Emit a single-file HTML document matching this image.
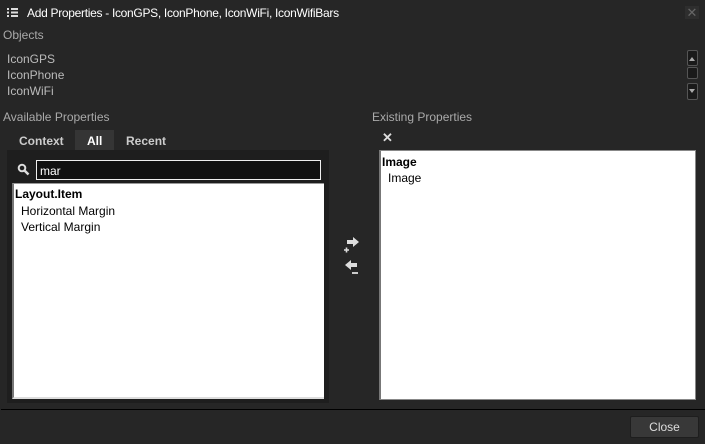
<!DOCTYPE html>
<html><head><style>
body{margin:0;width:705px;height:444px;background:#262626;font-family:"Liberation Sans",sans-serif;font-size:12px;color:#ccc;position:relative;overflow:hidden}
.a{position:absolute;white-space:nowrap}
</style></head><body>
<svg class="a" style="left:7px;top:8px" width="11" height="9"><path d="M0 1h2M4 1h7M0 4.5h2M4 4.5h7M0 8h2M4 8h7" stroke="#ddd" stroke-width="2"/></svg>
<div class="a" style="left:27px;top:6px;color:#fff;font-size:12px;letter-spacing:-0.3px">Add Properties - IconGPS, IconPhone, IconWiFi, IconWifiBars</div>
<div class="a" style="left:685px;top:6px;width:14px;height:13px;background:#2e2e2e;color:#666;font-size:13px;text-align:center;line-height:13px">✕</div>
<div class="a" style="left:3px;top:28px;color:#aaa">Objects</div>
<div class="a" style="left:7px;top:51px;color:#bbb;line-height:16px">IconGPS<br>IconPhone<br>IconWiFi</div>
<div class="a" style="left:687px;top:50px;width:9px;height:14px;border:1px solid #555;border-radius:2px;background:#1a1a1a"></div>
<div class="a" style="left:689px;top:57px;border:3px solid transparent;border-bottom:4px solid #aaa;border-top:0"></div>
<div class="a" style="left:687px;top:67px;width:9px;height:10px;border:1px solid #555;border-radius:2px;background:#1a1a1a"></div>
<div class="a" style="left:687px;top:83px;width:9px;height:15px;border:1px solid #555;border-radius:2px;background:#1a1a1a"></div>
<div class="a" style="left:689px;top:89px;border:3px solid transparent;border-top:4px solid #aaa;border-bottom:0"></div>
<div class="a" style="left:3px;top:110px;color:#aaa">Available Properties</div>
<div class="a" style="left:7px;top:150px;width:322px;height:253px;background:#1e1e1e"></div>
<div class="a" style="left:75px;top:130px;width:39px;height:20px;background:#353535"></div>
<div class="a" style="left:19px;top:134px;color:#ccc;font-weight:bold">Context</div>
<div class="a" style="left:87px;top:134px;color:#fff;font-weight:bold">All</div>
<div class="a" style="left:126px;top:134px;color:#ccc;font-weight:bold">Recent</div>
<svg class="a" style="left:17px;top:163px" width="13" height="13"><circle cx="5" cy="5" r="3.3" fill="none" stroke="#ddd" stroke-width="2"/><line x1="7.5" y1="7.5" x2="11.5" y2="11.5" stroke="#ddd" stroke-width="2.5"/></svg>
<div class="a" style="left:36px;top:160px;width:283px;height:18px;border:1px solid #eee;background:#111"></div>
<div class="a" style="left:40px;top:164px;color:#fff">mar</div>
<div class="a" style="left:12px;top:183px;width:310px;height:213px;background:#fff;border-left:2px solid #777;border-top:1px solid #999;border-bottom:2px solid #ddd"></div>
<div class="a" style="left:15px;top:187px;color:#000;font-weight:bold">Layout.Item</div>
<div class="a" style="left:21px;top:203px;color:#000;line-height:16px">Horizontal Margin<br>Vertical Margin</div>
<div class="a" style="left:372px;top:110px;color:#aaa">Existing Properties</div>
<div class="a" style="left:382px;top:130px;color:#ddd;font-size:13px;font-weight:bold">✕</div>
<div class="a" style="left:379px;top:150px;width:314px;height:248px;background:#fff;border:1px solid #888;border-left:2px solid #777"></div>
<div class="a" style="left:382px;top:155px;color:#000;font-weight:bold">Image</div>
<div class="a" style="left:388px;top:171px;color:#000">Image</div>
<svg class="a" style="left:342px;top:236px" width="20" height="40"><path d="M5 4h6V1l6 5-6 5V8H5z" fill="#ddd"/><path d="M2 14h5M4.5 11.5v5" stroke="#ddd" stroke-width="1.6"/><path d="M15 27H9v-3l-6 5 6 5v-3h6z" fill="#ddd"/><path d="M10 37h6" stroke="#ddd" stroke-width="1.8"/></svg>
<div class="a" style="left:1px;top:409px;width:704px;height:1px;background:#000"></div>
<div class="a" style="left:630px;top:416px;width:67px;height:20px;background:#383838;border:1px solid #1e1e1e;border-radius:2px;color:#ddd;text-align:center;line-height:20px">Close</div>
</body></html>
